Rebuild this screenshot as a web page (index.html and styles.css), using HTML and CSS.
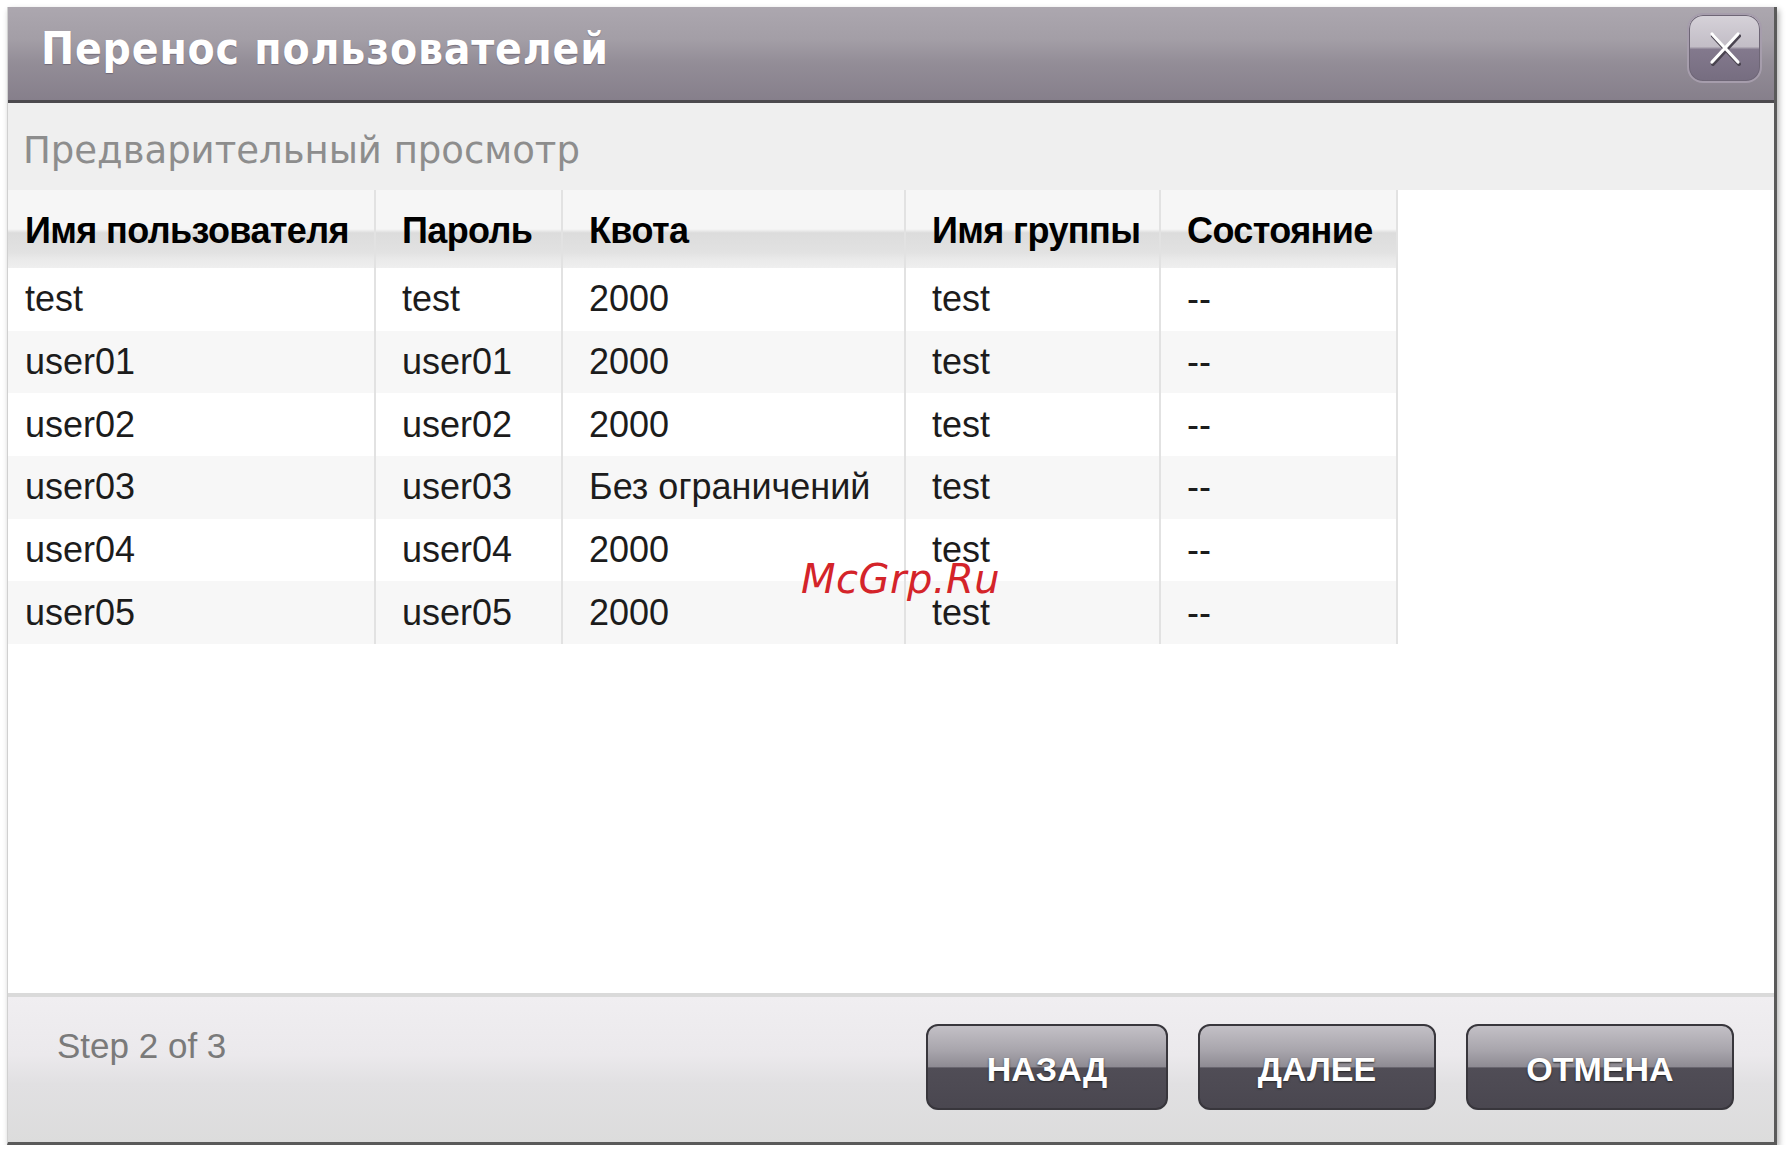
FILE: index.html
```html
<!DOCTYPE html>
<html lang="ru">
<head>
<meta charset="UTF-8">
<title>Перенос пользователей</title>
<link rel="stylesheet" href="styles.css">
</head>
<body>
    <div class="dialog">
        <div class="titlebar">
            <span class="title">Перенос пользователей</span>
            <a href="#" class="close-button">
                <svg width="34" height="36" viewBox="0 0 34 36">
                    <path d="M4 4 L30 32 M30 4 L4 32" stroke="#4a4450" stroke-width="4" stroke-linecap="round" transform="translate(1 2)"/>
                    <path d="M4 4 L30 32 M30 4 L4 32" stroke="#ffffff" stroke-width="3.2" stroke-linecap="round"/>
                </svg>
            </a>
        </div>

        <div class="subtitle">Предварительный просмотр</div>

        <div class="content">
            <table class="preview-table">
                <colgroup>
                    <col class="col-user">
                    <col class="col-pass">
                    <col class="col-quota">
                    <col class="col-group">
                    <col class="col-state">
                </colgroup>
                <thead>
                    <tr>
                        <th>Имя пользователя</th>
                        <th>Пароль</th>
                        <th>Квота</th>
                        <th>Имя группы</th>
                        <th>Состояние</th>
                    </tr>
                </thead>
                <tbody>
                    <tr><td>test</td><td>test</td><td>2000</td><td>test</td><td>--</td></tr>
                    <tr><td>user01</td><td>user01</td><td>2000</td><td>test</td><td>--</td></tr>
                    <tr><td>user02</td><td>user02</td><td>2000</td><td>test</td><td>--</td></tr>
                    <tr><td>user03</td><td>user03</td><td>Без ограничений</td><td>test</td><td>--</td></tr>
                    <tr><td>user04</td><td>user04</td><td>2000</td><td>test</td><td>--</td></tr>
                    <tr><td>user05</td><td>user05</td><td>2000</td><td>test</td><td>--</td></tr>
                </tbody>
            </table>
            <span class="watermark">McGrp.Ru</span>
        </div>

        <div class="footer">
            <span class="step">Step 2 of 3</span>
            <div class="buttons">
                <button class="wizard-button back">НАЗАД</button>
                <button class="wizard-button next">ДАЛЕЕ</button>
                <button class="wizard-button cancel">ОТМЕНА</button>
            </div>
        </div>
    </div>
</body>
</html>
```

FILE: styles.css
```css
body {
    margin: 0;
    padding: 0;
    background-color: #fff;
    font-family: "Liberation Sans", Arial, sans-serif;
}

.dialog {
    margin: 7px 0 0 7px;
    width: 1766px;
    height: 1135px;
    display: flex;
    flex-direction: column;
    background-color: #fff;
    border-left: 1px solid #d0d0d0;
    border-right: 3px solid #5a5a5a;
    border-bottom: 3px solid #5a5a5a;
    box-shadow: 2px 3px 6px rgba(0, 0, 0, 0.3);
}

.titlebar {
    height: 93px;
    flex-shrink: 0;
    display: flex;
    justify-content: space-between;
    align-items: flex-start;
    padding: 0 12px 0 33px;
    background: linear-gradient(#aca7af 0%, #a39ea6 35%, #938d97 60%, #867f8b 100%);
    border-bottom: 3px solid #4c4a4e;
}

.title {
    margin-top: 17px;
    font-family: "DejaVu Sans Condensed", "DejaVu Sans", sans-serif;
    font-stretch: condensed;
    font-weight: bold;
    font-size: 44px;
    line-height: 50px;
    color: #fff;
    letter-spacing: 0.8px;
    text-shadow: 0 1px 1px rgba(60, 50, 70, 0.4);
}

.close-button {
    margin-top: 6px;
    width: 71px;
    height: 66px;
    display: flex;
    align-items: center;
    justify-content: center;
    border: 2px solid #a69dac;
    border-radius: 16px;
    background: linear-gradient(#d6d2d9 0%, #c2bdc6 48%, #83798d 52%, #766d80 100%);
    box-shadow: inset 0 0 0 1px #6e6676;
}

.subtitle {
    height: 87px;
    flex-shrink: 0;
    box-sizing: border-box;
    padding: 26px 0 0 15px;
    background-color: #efefef;
    font-family: "DejaVu Sans", sans-serif;
    font-size: 37px;
    color: #8d8d8d;
}

.content {
    flex: 1;
    position: relative;
    border-bottom: 4px solid #dadada;
}

.preview-table {
    border-collapse: collapse;
    table-layout: fixed;
    width: 1389px;
}

.col-user { width: 367px; }
.col-pass { width: 187px; }
.col-quota { width: 343px; }
.col-group { width: 255px; }
.col-state { width: 237px; }

.preview-table th,
.preview-table td {
    padding: 0 0 0 26px;
    text-align: left;
    white-space: nowrap;
    border-left: 2px solid #e2e2e2;
}

.preview-table th:first-child,
.preview-table td:first-child {
    padding-left: 17px;
    border-left: none;
}

.preview-table th:last-child,
.preview-table td:last-child {
    border-right: 2px solid #e2e2e2;
}

.preview-table th {
    height: 75px;
    padding-top: 3px;
    font-size: 36px;
    font-weight: bold;
    letter-spacing: -0.6px;
    color: #000;
    background: linear-gradient(#f6f6f6 0%, #f6f6f6 50%, #dcdcdc 55%, #e2e2e2 80%, #e9e9e9 88%, #efefef 100%);
}

.preview-table td {
    height: 62.7px;
    font-size: 36px;
    color: #1c1c1c;
}

.preview-table tbody tr:nth-child(even) td {
    background-color: #f7f7f7;
}

.watermark {
    position: absolute;
    left: 793px;
    top: 366px;
    font-family: "DejaVu Sans", sans-serif;
    font-style: italic;
    font-size: 40px;
    letter-spacing: 0.5px;
    color: #d4242a;
}

.footer {
    height: 145px;
    flex-shrink: 0;
    box-sizing: border-box;
    display: flex;
    justify-content: space-between;
    align-items: flex-start;
    padding: 27px 40px 0 49px;
    background: linear-gradient(#f0eef1 0%, #ebe9ec 40%, #e1e0e2 60%, #dcdcdc 100%);
}

.step {
    margin-top: 2px;
    font-size: 35px;
    color: #7a7a7a;
}

.buttons {
    display: flex;
    gap: 30px;
}

.wizard-button {
    height: 86px;
    border: 2px solid #38363c;
    border-radius: 12px;
    background: linear-gradient(#c3c0c6 0%, #a8a5ac 30%, #8e8b93 50%, #504d56 51%, #4a4750 100%);
    font-family: "Liberation Sans", Arial, sans-serif;
    font-weight: bold;
    font-size: 34px;
    color: #fff;
    text-shadow: 0 1px 2px #222;
    cursor: pointer;
    padding: 4px 0 0 0;
}

.back { width: 242px; }
.next { width: 238px; }
.cancel { width: 268px; }
```
